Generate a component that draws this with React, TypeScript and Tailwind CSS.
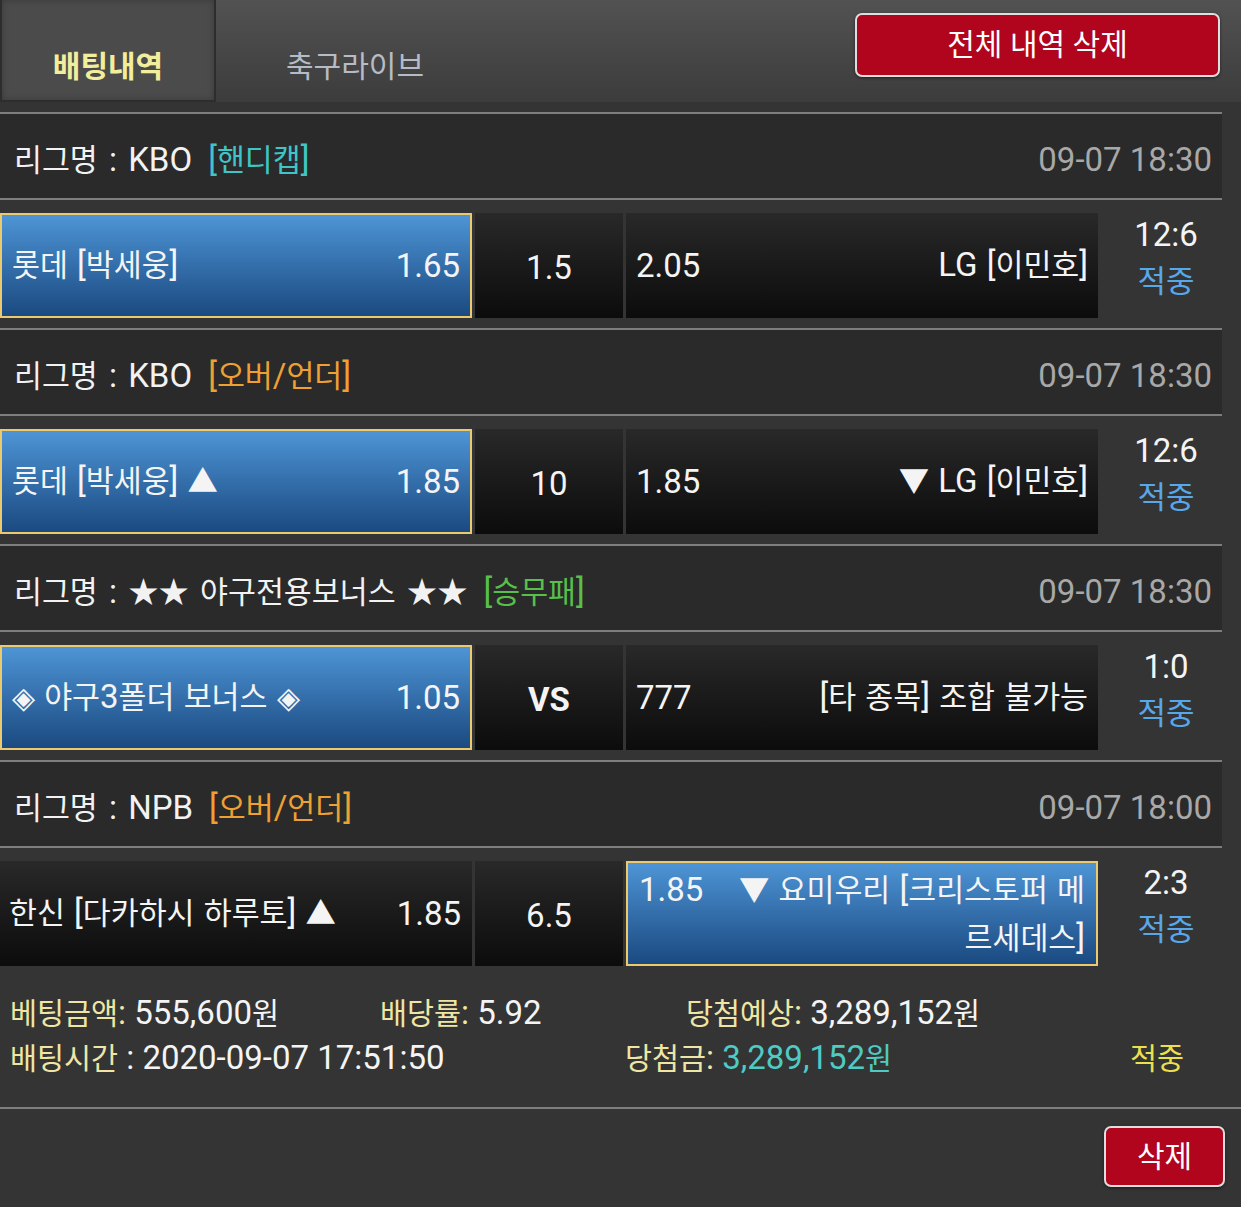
import React from "react";

const KRE = /([\u3131-\u318E\uAC00-\uD7A3★◈▲▼]+)/;

function T({ s, k = "text-[0.92em]" }: { s: string; k?: string }) {
  const parts = s.split(KRE);
  return (
    <>
      {parts.map((p, i) =>
        i % 2 === 1 ? (
          <span key={i} className={k}>
            {p}
          </span>
        ) : (
          <React.Fragment key={i}>{p}</React.Fragment>
        )
      )}
    </>
  );
}

type Match = {
  league: string;
  tag: string;
  tagClass: string;
  date: string;
  home: string;
  homeOdds: string;
  mid: string;
  midBold?: boolean;
  awayOdds: string;
  away: string;
  away2?: string;
  sel: "home" | "away";
  score: string;
};

const matches: Match[] = [
  {
    league: "KBO",
    tag: "[핸디캡]",
    tagClass: "text-[#3fc5c7]",
    date: "09-07 18:30",
    home: "롯데 [박세웅]",
    homeOdds: "1.65",
    mid: "1.5",
    awayOdds: "2.05",
    away: "LG [이민호]",
    sel: "home",
    score: "12:6",
  },
  {
    league: "KBO",
    tag: "[오버/언더]",
    tagClass: "text-[#eea033]",
    date: "09-07 18:30",
    home: "롯데 [박세웅] ▲",
    homeOdds: "1.85",
    mid: "10",
    awayOdds: "1.85",
    away: "▼ LG [이민호]",
    sel: "home",
    score: "12:6",
  },
  {
    league: "★★ 야구전용보너스 ★★",
    tag: "[승무패]",
    tagClass: "text-[#58bf4b]",
    date: "09-07 18:30",
    home: "◈ 야구3폴더 보너스 ◈",
    homeOdds: "1.05",
    mid: "VS",
    midBold: true,
    awayOdds: "777",
    away: "[타 종목] 조합 불가능",
    sel: "home",
    score: "1:0",
  },
  {
    league: "NPB",
    tag: "[오버/언더]",
    tagClass: "text-[#eea033]",
    date: "09-07 18:00",
    home: "한신 [다카하시 하루토] ▲",
    homeOdds: "1.85",
    mid: "6.5",
    awayOdds: "1.85",
    away: "▼ 요미우리 [크리스토퍼 메",
    away2: "르세데스]",
    sel: "away",
    score: "2:3",
  },
];

const SEL =
  "border-2 border-[#ebc96f] bg-linear-to-b from-[#4e95d6] to-[#1b4a81]";
const DARK = "bg-linear-to-b from-[#292929] to-[#0c0c0c]";

function Block({ m, last }: { m: Match; last: boolean }) {
  return (
    <div>
      <div className="h-[2px] bg-[#7e7e7e]" />
      <div className="flex h-[84px] items-center justify-between bg-[#2a2a2a] pl-[14px] pr-[10px] pt-[8px] text-[33px] leading-[40px]">
        <div className="whitespace-nowrap text-[#f2f2f2] [word-spacing:3px]">
          <T s={"리그명 : " + m.league} />
          <span className={"ml-[16px] " + m.tagClass}>
            <T s={m.tag} />
          </span>
        </div>
        <div className="text-[33px] text-[#a8a8a8]">{m.date}</div>
      </div>
      <div className="h-[2px] bg-[#7e7e7e]" />
      <div className={last ? "flex pt-[13px]" : "flex pb-[10px] pt-[13px]"}>
        <div
          className={
            "flex h-[105px] w-[472px] items-center justify-between whitespace-nowrap text-[33px] leading-[40px] text-[#f4f4f4] " +
            (m.sel === "home" ? SEL + " px-[10px]" : DARK + " pl-[9px] pr-[11px]")
          }
        >
          <span className="[word-spacing:1px]">
            <T s={m.home} />
          </span>
          <span>{m.homeOdds}</span>
        </div>
        <div
          className={
            "ml-[3px] flex h-[105px] w-[148px] items-center justify-center pt-[4px] text-[33px] leading-[40px] text-[#f4f4f4] " +
            DARK +
            (m.midBold ? " font-bold" : "")
          }
        >
          {m.mid}
        </div>
        {m.away2 ? (
          <div
            className={
              "ml-[3px] flex h-[105px] w-[472px] flex-col justify-center whitespace-nowrap pl-[11px] pr-[11px] text-[33px] leading-[47px] text-[#f4f4f4] " +
              SEL
            }
          >
            <div className="flex justify-between">
              <span>{m.awayOdds}</span>
              <span className="[word-spacing:1px]">
                <T s={m.away} />
              </span>
            </div>
            <div className="text-right">
              <T s={m.away2} />
            </div>
          </div>
        ) : (
          <div
            className={
              "ml-[3px] flex h-[105px] w-[472px] items-center justify-between whitespace-nowrap pl-[10px] pr-[10px] text-[33px] leading-[40px] text-[#f4f4f4] " +
              (m.sel === "away" ? SEL : DARK)
            }
          >
            <span>{m.awayOdds}</span>
            <span className="[word-spacing:1px]">
              <T s={m.away} />
            </span>
          </div>
        )}
        <div className="flex w-[124px] flex-col items-center pl-[12px] leading-[46px]">
          <div className="-mt-px text-[33px] text-[#f4f4f4]">{m.score}</div>
          <div className="mt-px text-[31px] text-[#57a7e9]">적중</div>
        </div>
      </div>
    </div>
  );
}

const SK = "text-[0.89em] leading-none";

export default function App() {
  return (
    <div className="min-h-[1207px] w-[1241px] overflow-hidden bg-[#343434] font-[Roboto,'Noto_Sans_CJK_KR',sans-serif] text-white">
      <div className="flex h-[102px] bg-linear-to-b from-[#525252] to-[#3c3c3c]">
        <div className="flex h-[102px] w-[216px] items-center justify-center border-x-2 border-b-2 border-[#2d2d2d] bg-[#4b4b4b] pt-[34px] text-[30px] font-bold leading-[40px] text-[#f2ee9c] shadow-[inset_0_0_6px_rgba(0,0,0,0.25)]">
          배팅내역
        </div>
        <div className="flex w-[278px] items-center justify-center pt-[32px] text-[30px] leading-[40px] text-[#b6bbc6]">
          축구라이브
        </div>
        <div className="ml-auto mr-[21px] mt-[13px] flex h-[64px] w-[365px] items-center justify-center rounded-[7px] border-2 border-[#dedede] bg-[#b1051d] text-[30px] leading-[40px] text-white shadow-[0_1px_3px_rgba(0,0,0,0.5)]">
          전체 내역 삭제
        </div>
      </div>

      <div className="mt-[10px] w-[1222px]">
        {matches.map((m, i) => (
          <Block key={i} m={m} last={i === matches.length - 1} />
        ))}
        <div className="pb-[27px] pt-[24px] text-[33px] text-[#f4f4f4]">
          <div className="flex h-[45px] items-center whitespace-nowrap leading-[45px]">
            <div className="w-[380px] pl-[10px]">
              <span className="text-[#efe6a6]">
                <T s="베팅금액:" k={SK} />
              </span>{" "}
              <T s="555,600원" k={SK} />
            </div>
            <div className="w-[306px]">
              <span className="text-[#efe6a6]">
                <T s="배당률:" k={SK} />
              </span>{" "}
              5.92
            </div>
            <div>
              <span className="text-[#efe6a6]">
                <T s="당첨예상:" k={SK} />
              </span>{" "}
              <T s="3,289,152원" k={SK} />
            </div>
          </div>
          <div className="flex h-[45px] items-center whitespace-nowrap leading-[45px]">
            <div className="w-[625px] pl-[10px]">
              <span className="text-[#efe6a6]">
                <T s="배팅시간" k={SK} />
              </span>{" "}
              : 2020-09-07 17:51:50
            </div>
            <div className="w-[505px]">
              <span className="text-[#efe6a6]">
                <T s="당첨금:" k={SK} />
              </span>{" "}
              <span className="text-[#4ecbc3]">
                <T s="3,289,152원" k={SK} />
              </span>
            </div>
            <div className="text-[#ece04f]">
              <T s="적중" k={SK} />
            </div>
          </div>
        </div>
      </div>
      <div className="h-[2px] w-[1241px] bg-[#7e7e7e]" />
      <div className="flex justify-end pb-[20px] pr-[16px] pt-[17px]">
        <div className="flex h-[61px] w-[121px] items-center justify-center rounded-[7px] border-2 border-[#dedede] bg-[#b1051d] text-[30px] leading-[40px] text-white shadow-[0_1px_3px_rgba(0,0,0,0.5)]">
          삭제
        </div>
      </div>
    </div>
  );
}
